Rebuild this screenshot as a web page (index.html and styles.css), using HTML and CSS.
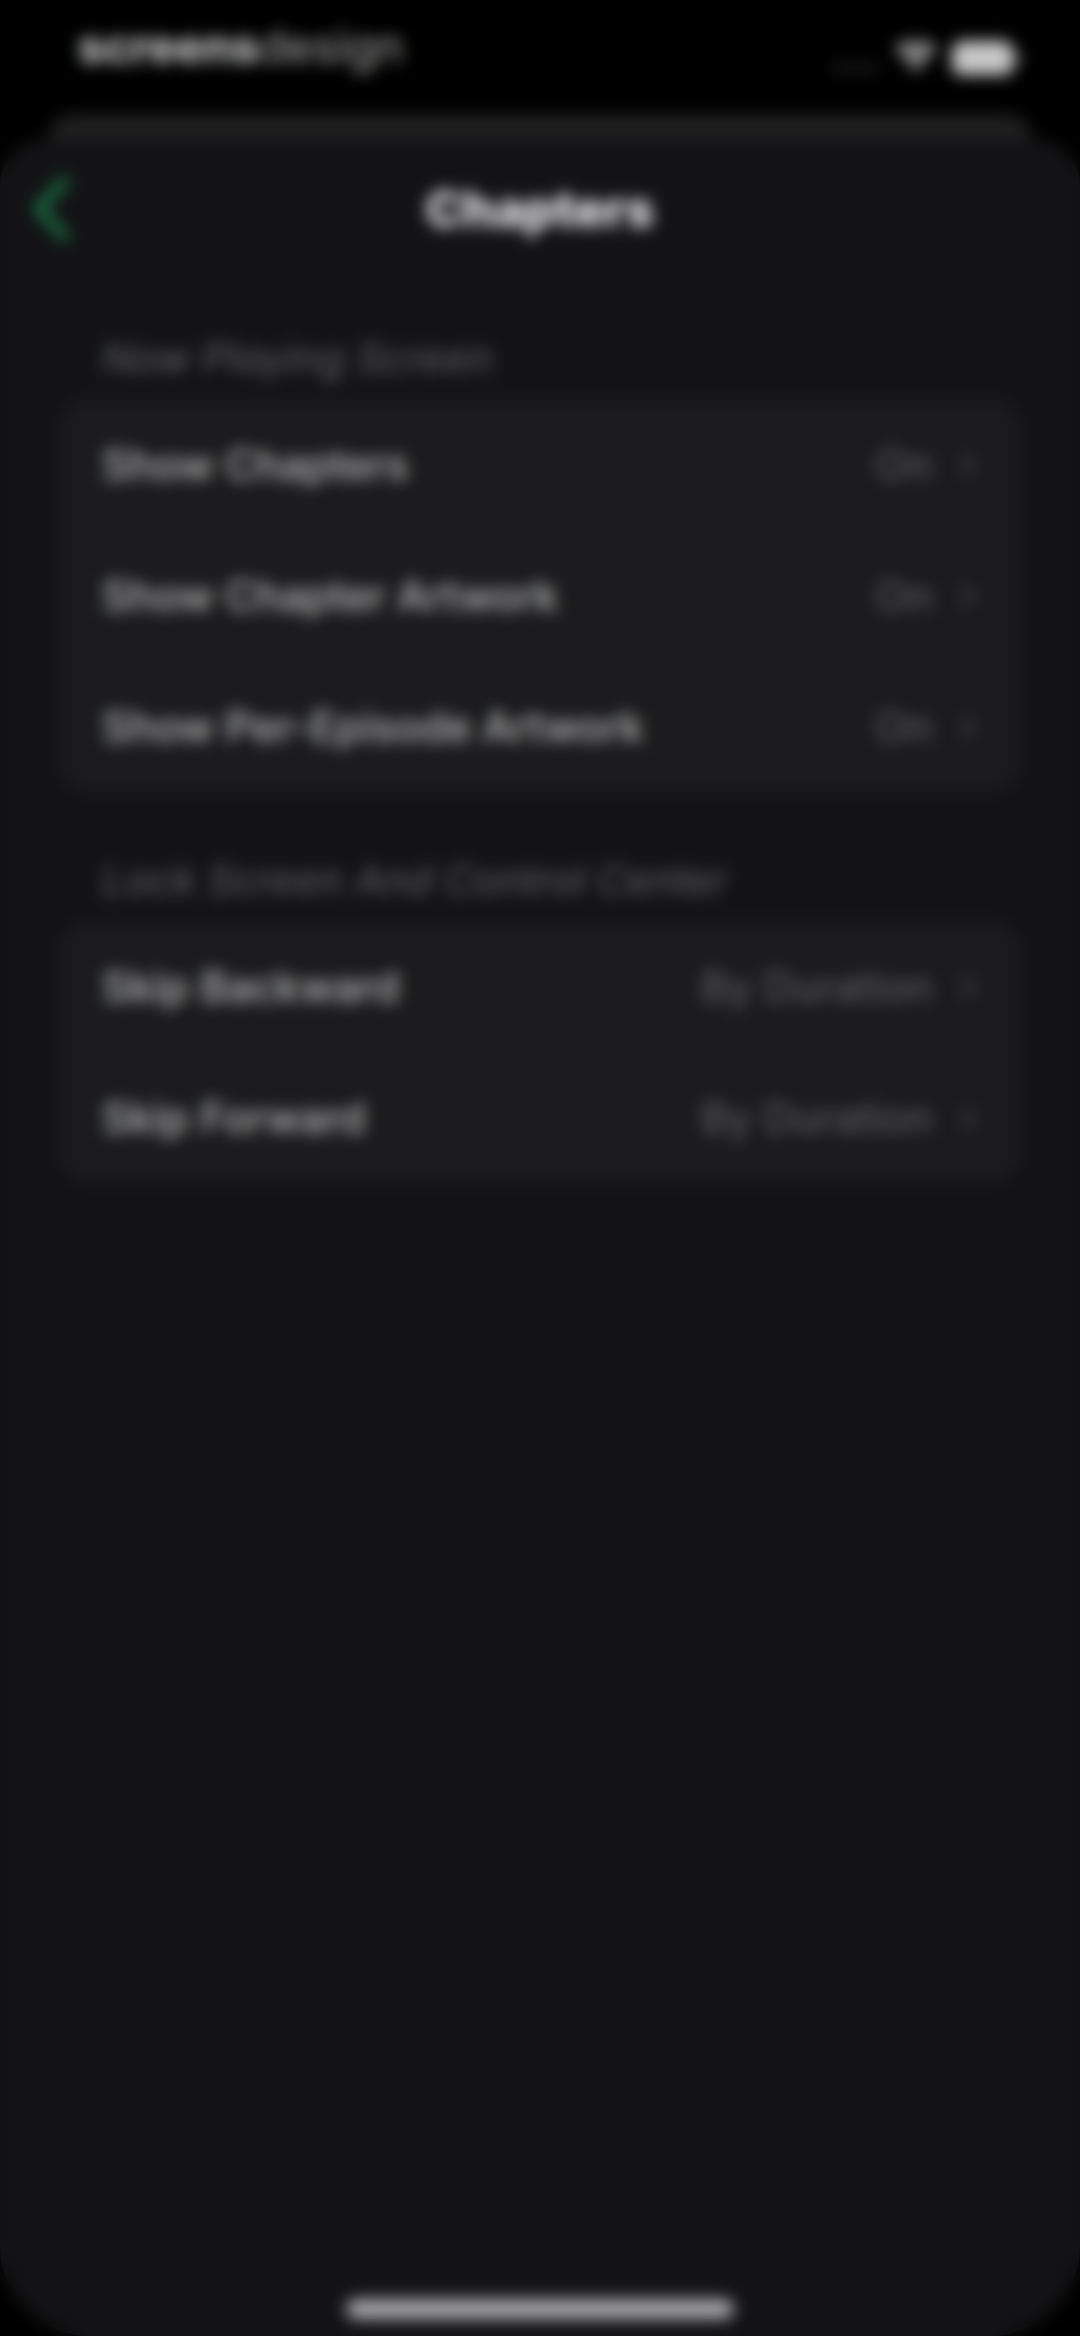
FILE: index.html
```html
<!DOCTYPE html>
<html lang="en">
<head>
<meta charset="utf-8">
<meta name="viewport" content="width=device-width, initial-scale=1">
<title>Chapters</title>
<link rel="stylesheet" href="styles.css">
</head>
<body>
<div class="screen">
  <div class="status">
    <div class="brand"><b>screens</b>design</div>
    <div class="indicators">
      <svg class="signal" viewBox="0 0 48 10" aria-hidden="true"><circle cx="5" cy="5" r="4"/><circle cx="17" cy="5" r="4"/><circle cx="29" cy="5" r="4"/><circle cx="41" cy="5" r="4"/></svg>
      <svg class="wifi" viewBox="0 0 44 32" aria-hidden="true"><path d="M22 31l6-7a9 9 0 0 0-12 0zM12 20a15 15 0 0 1 20 0l4-5a22 22 0 0 0-28 0zM4 11a27 27 0 0 1 36 0l4-5a34 34 0 0 0-44 0z"/></svg>
      <svg class="battery" viewBox="0 0 70 36" aria-hidden="true"><rect width="63" height="36" rx="11"/><path d="M66 12q4 2 4 6t-4 6z"/></svg>
    </div>
  </div>
  <div class="behind"></div>
  <main class="sheet">
    <header class="nav">
      <button class="back" aria-label="Back"><svg viewBox="0 0 36 60" aria-hidden="true"><path d="M31 4L6 30l25 26"/></svg></button>
      <h1>Chapters</h1>
    </header>
    <section>
      <h2>Now Playing Screen</h2>
      <div class="card">
        <button class="row"><span>Show Chapters</span><span class="value">On</span><svg class="chevron" viewBox="0 0 16 24" aria-hidden="true"><path d="M3 2l10 10L3 22"/></svg></button>
        <button class="row"><span>Show Chapter Artwork</span><span class="value">On</span><svg class="chevron" viewBox="0 0 16 24" aria-hidden="true"><path d="M3 2l10 10L3 22"/></svg></button>
        <button class="row"><span>Show Per-Episode Artwork</span><span class="value">On</span><svg class="chevron" viewBox="0 0 16 24" aria-hidden="true"><path d="M3 2l10 10L3 22"/></svg></button>
      </div>
    </section>
    <section>
      <h2>Lock Screen And Control Center</h2>
      <div class="card">
        <button class="row"><span>Skip Backward</span><span class="value">By Duration</span><svg class="chevron" viewBox="0 0 16 24" aria-hidden="true"><path d="M3 2l10 10L3 22"/></svg></button>
        <button class="row"><span>Skip Forward</span><span class="value">By Duration</span><svg class="chevron" viewBox="0 0 16 24" aria-hidden="true"><path d="M3 2l10 10L3 22"/></svg></button>
      </div>
    </section>
    <div class="home"></div>
  </main>
</div>
<div class="veil"></div>
</body>
</html>
```
FILE: styles.css
```css
* { box-sizing: border-box; }
body {
  margin: 0;
  background: #000;
  color: #fff;
  font-family: Inter, "Liberation Sans", sans-serif;
}
button {
  margin: 0;
  padding: 0;
  border: 0;
  background: none;
  color: inherit;
  font: inherit;
  text-align: left;
}
h1, h2 { margin: 0; }
.screen {
  min-height: 100vh;
  display: flex;
  flex-direction: column;
}
.status {
  height: 114px;
  padding: 0 60px 0 78px;
  display: flex;
  justify-content: space-between;
}
.brand {
  padding-top: 20px;
  font-size: 46px;
  line-height: 52px;
  font-weight: 400;
  color: #aaa;
}
.brand b { font-weight: 700; color: #d8d8d8; }
.indicators {
  height: 116px;
  display: flex;
  align-items: center;
  gap: 16px;
  fill: #c8c8c8;
}
.signal { width: 48px; fill: #333; margin-top: 20px; }
.wifi { width: 40px; fill: #fff; }
.battery { width: 68px; }
.behind {
  height: 26px;
  margin: 0 48px;
  border-radius: 26px 26px 0 0;
  background: #1f1f20;
}
.sheet {
  flex: 1;
  display: flex;
  flex-direction: column;
  padding: 0 60px;
  border-radius: 44px 44px 90px 90px;
  background: #131315;
}
.nav {
  height: 138px;
  margin: 0 -28px;
  display: grid;
  grid-template-columns: 120px 1fr 120px;
  align-items: center;
}
.back svg {
  display: block;
  width: 38px;
  fill: none;
  stroke: #1a7446;
  stroke-width: 9;
  stroke-linecap: round;
  stroke-linejoin: round;
}
h1 {
  font-size: 50px;
  line-height: 60px;
  font-weight: 800;
  text-align: center;
  color: #f0f0f2;
}
section { margin-bottom: 8px; }
h2 {
  padding: 54px 42px 15px;
  font-size: 41px;
  line-height: 52px;
  font-weight: 400;
  font-style: italic;
  color: #626266;
}
.card {
  border-radius: 28px;
  background: #1b1b1d;
}
.row {
  width: 100%;
  height: 131px;
  padding: 0 44px 0 42px;
  display: flex;
  align-items: center;
  font-size: 42px;
  font-weight: 500;
  color: #bababc;
}
.value {
  margin-left: auto;
  font-weight: 400;
  color: #646468;
}
.chevron {
  width: 16px;
  margin-left: 28px;
  fill: none;
  stroke: #48484c;
  stroke-width: 4;
}
.home {
  width: 388px;
  height: 20px;
  margin: auto auto 17px;
  border-radius: 10px;
  background: #a8a8aa;
}
/* Frosted cover over the whole screen */
.veil {
  position: fixed;
  inset: 0;
  backdrop-filter: blur(8px);
  pointer-events: none;
}
```
